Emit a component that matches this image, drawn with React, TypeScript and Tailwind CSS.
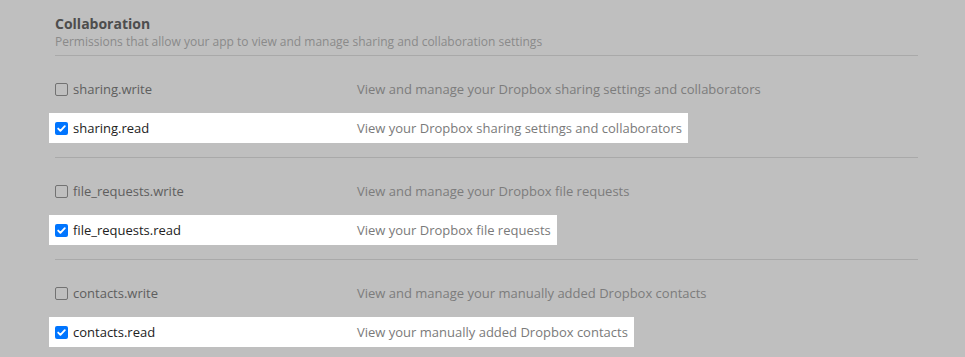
const sections = [
  [
    { scope: "sharing.write", desc: "View and manage your Dropbox sharing settings and collaborators", checked: false },
    { scope: "sharing.read", desc: "View your Dropbox sharing settings and collaborators", checked: true },
  ],
  [
    { scope: "file_requests.write", desc: "View and manage your Dropbox file requests", checked: false },
    { scope: "file_requests.read", desc: "View your Dropbox file requests", checked: true },
  ],
  [
    { scope: "contacts.write", desc: "View and manage your manually added Dropbox contacts", checked: false },
    { scope: "contacts.read", desc: "View your manually added Dropbox contacts", checked: true },
  ],
];

const Box = ({ checked }: { checked: boolean }) =>
  checked ? (
    <span className="flex h-[13px] w-[13px] shrink-0 items-center justify-center rounded-[2px] bg-[#0075ff] mb-[2px]">
      <svg width="11" height="11" viewBox="0 0 11 11" fill="none">
        <path d="M2.2 5.6 L4.4 7.8 L8.8 3.2" stroke="#fff" strokeWidth="1.9" strokeLinecap="round" strokeLinejoin="round" />
      </svg>
    </span>
  ) : (
    <span className="h-[13px] w-[13px] shrink-0 rounded-[2px] border border-[#727272] mb-[2px]" />
  );

export default function App() {
  return (
    <div className="min-h-[357px] w-[965px] bg-[#bfbfbf] font-['Open_Sans',sans-serif] pl-[55px] pr-[47px] pt-[14px]">
      <h2 className="text-[14px] leading-[20px] font-bold text-[#4d4d4d]">Collaboration</h2>
      <p className="text-[12px] leading-[16px] text-[#8a8a8a] mb-[5px]">
        Permissions that allow your app to view and manage sharing and collaboration settings
      </p>
      {sections.map((rows, i) => (
        <div key={i} className="border-t border-[#a9a9a9] pt-[18px] pb-[14px] flex flex-col gap-[9px]">
          {rows.map((r) => (
            <div
              key={r.scope}
              className={`-ml-[6px] px-[6px] pt-[2px] flex h-[30px] w-fit items-center text-[13px] ${r.checked ? "bg-white" : ""}`}
            >
              <div className="flex w-[302px] items-center gap-[5px]">
                <Box checked={r.checked} />
                <span className={r.checked ? "text-[#222222]" : "text-[#5e5e5e]"}>{r.scope}</span>
              </div>
              <span className={r.checked ? "text-[#7a7a7a]" : "text-[#7c7c7c]"}>{r.desc}</span>
            </div>
          ))}
        </div>
      ))}
    </div>
  );
}
